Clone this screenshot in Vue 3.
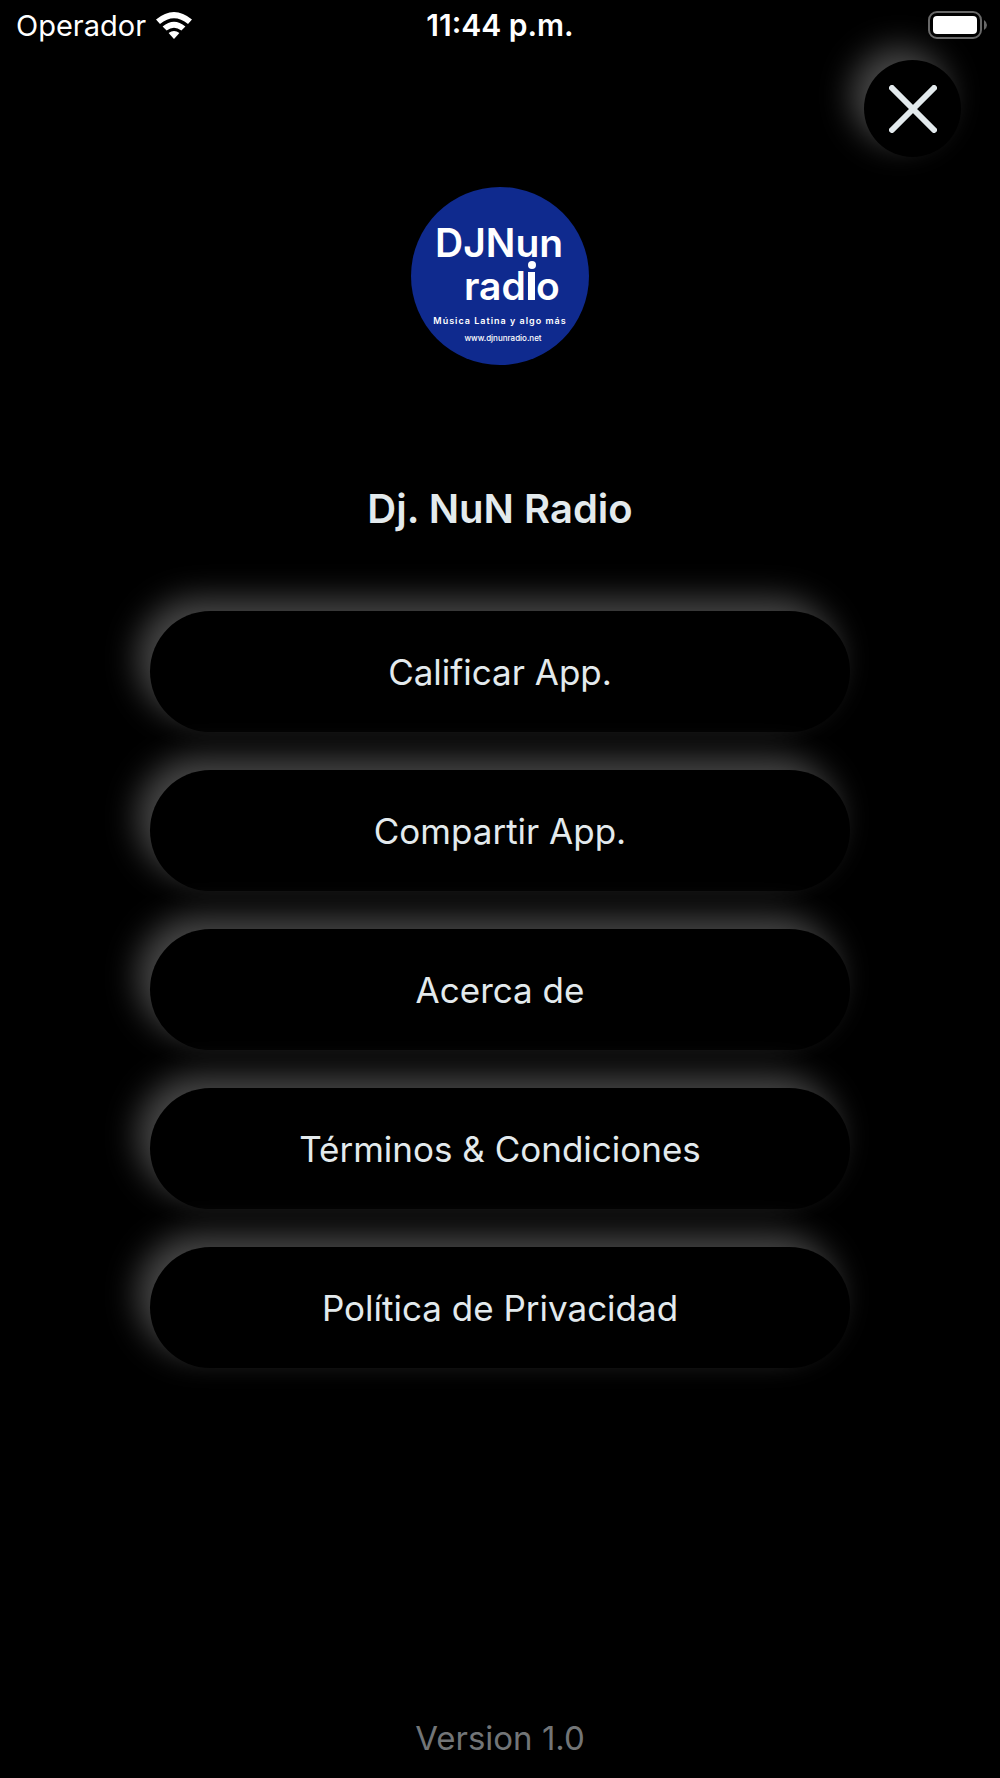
<template>
    <div class="screen">
        <header class="status-bar">
            <div class="carrier">
                <span>Operador</span>
                <svg class="wifi" viewBox="0 0 36 27" aria-hidden="true">
                    <path d="M0 7.6Q18-7.6 36 7.6L32 12Q18 .3 4 12Z" />
                    <path d="M6.6 14.4Q18 5 29.4 14.4L25.4 18.6Q18 12.8 10.6 18.6Z" />
                    <path d="M12.6 20.9Q18 16.9 23.4 20.9L18 27Z" />
                </svg>
            </div>
            <time class="clock">11:44 p.m.</time>
            <svg class="battery" viewBox="0 0 60 28" aria-hidden="true">
                <rect class="battery-case" x="1" y="1" width="52" height="26" rx="8" />
                <rect class="battery-level" x="5" y="5" width="44" height="18" rx="4" />
                <path class="battery-cap" d="M56 9Q59 11 59 14T56 19Z" />
            </svg>
        </header>

        <div class="toolbar">
            <button type="button" class="close-button" aria-label="Cerrar">
                <svg viewBox="0 0 48 48" aria-hidden="true">
                    <path d="M3 3L45 45M45 3L3 45" />
                </svg>
            </button>
        </div>

        <main class="content">
            <svg class="logo" viewBox="0 0 178 178" role="img" aria-label="DJNun radio">
                <circle class="logo-disc" cx="89" cy="89" r="89" />
                <text class="logo-name" x="24" y="70">DJNun</text>
                <text class="logo-name" x="53" y="113">radıo</text>
                <!-- la i alta del logo -->
                <rect class="logo-mark" x="117" y="85" width="7" height="28" />
                <circle class="logo-mark" cx="121" cy="78" r="4" />
                <text class="logo-slogan" x="89" y="137">Música Latina y algo más</text>
                <text class="logo-url" x="92" y="154">www.djnunradio.net</text>
            </svg>

            <h1 class="title">Dj. NuN Radio</h1>

            <nav class="menu">
                <button v-for="item in items" :key="item" type="button" class="menu-button">
                    {{ item }}
                </button>
            </nav>
        </main>

        <footer class="version">Version 1.0</footer>
    </div>
</template>

<script setup>
const items = [
    "Calificar App.",
    "Compartir App.",
    "Acerca de",
    "Términos & Condiciones",
    "Política de Privacidad",
];
</script>

<style>
body {
    margin: 0;
    background-color: #000;
}
</style>

<style scoped>
.screen {
    display: flex;
    flex-direction: column;
    min-height: 100vh;
    box-sizing: border-box;
    padding-bottom: 20px;
    background-color: #000;
    color: #e3eaed;
    font-family: Inter, "Liberation Sans", sans-serif;
}

/* barra de estado */
.status-bar {
    display: grid;
    grid-template-columns: 1fr auto 1fr;
    align-items: center;
    height: 50px;
    padding: 0 12px;
    color: #fff;
    font-size: 29px;
}

.carrier {
    display: flex;
    align-items: center;
    gap: 10px;
    padding-left: 4px;
}

.wifi {
    width: 36px;
    height: 27px;
    fill: #fff;
}

.clock {
    font-size: 30px;
    font-weight: 600;
}

.battery {
    justify-self: end;
    width: 60px;
    height: 28px;
}

.battery-case {
    fill: none;
    stroke: #686868;
    stroke-width: 2;
}

.battery-level {
    fill: #fff;
}

.battery-cap {
    fill: #686868;
}

/* botón cerrar */
.toolbar {
    display: flex;
    justify-content: flex-end;
    padding: 10px 39px 0;
}

.close-button {
    display: flex;
    align-items: center;
    justify-content: center;
    width: 97px;
    height: 97px;
    padding: 0;
    border: none;
    border-radius: 50%;
    background-color: #000;
    box-shadow: -13px -13px 32px rgba(255, 255, 255, 0.28);
    cursor: pointer;
}

.close-button svg {
    width: 48px;
    height: 48px;
    fill: none;
    stroke: #e3eaed;
    stroke-width: 6;
    stroke-linecap: round;
}

.content {
    display: flex;
    flex-direction: column;
    align-items: center;
    padding-top: 30px;
}

/* logo */
.logo {
    width: 178px;
    height: 178px;
}

.logo-disc {
    fill: #0f2a8e;
}

.logo-mark {
    fill: #fff;
}

.logo-name {
    fill: #fff;
    font-size: 39px;
    font-weight: 600;
}

.logo-slogan,
.logo-url {
    fill: #fff;
    text-anchor: middle;
}

.logo-slogan {
    font-size: 9px;
    font-weight: 600;
    letter-spacing: 1px;
}

.logo-url {
    font-size: 8px;
    font-weight: 500;
}

.title {
    margin: 120px 0 0;
    font-size: 40px;
    font-weight: 600;
    line-height: 48px;
}

/* menú */
.menu {
    display: flex;
    flex-direction: column;
    gap: 38px;
    width: 70%;
    margin-top: 78px;
}

.menu-button {
    height: 121px;
    border: none;
    border-radius: 61px;
    background-color: #000;
    box-shadow: -13px -13px 32px rgba(255, 255, 255, 0.28);
    color: inherit;
    font-family: inherit;
    font-size: 35px;
    cursor: pointer;
}

.version {
    margin-top: auto;
    color: #727577;
    font-size: 33px;
    line-height: 40px;
    text-align: center;
}
</style>
